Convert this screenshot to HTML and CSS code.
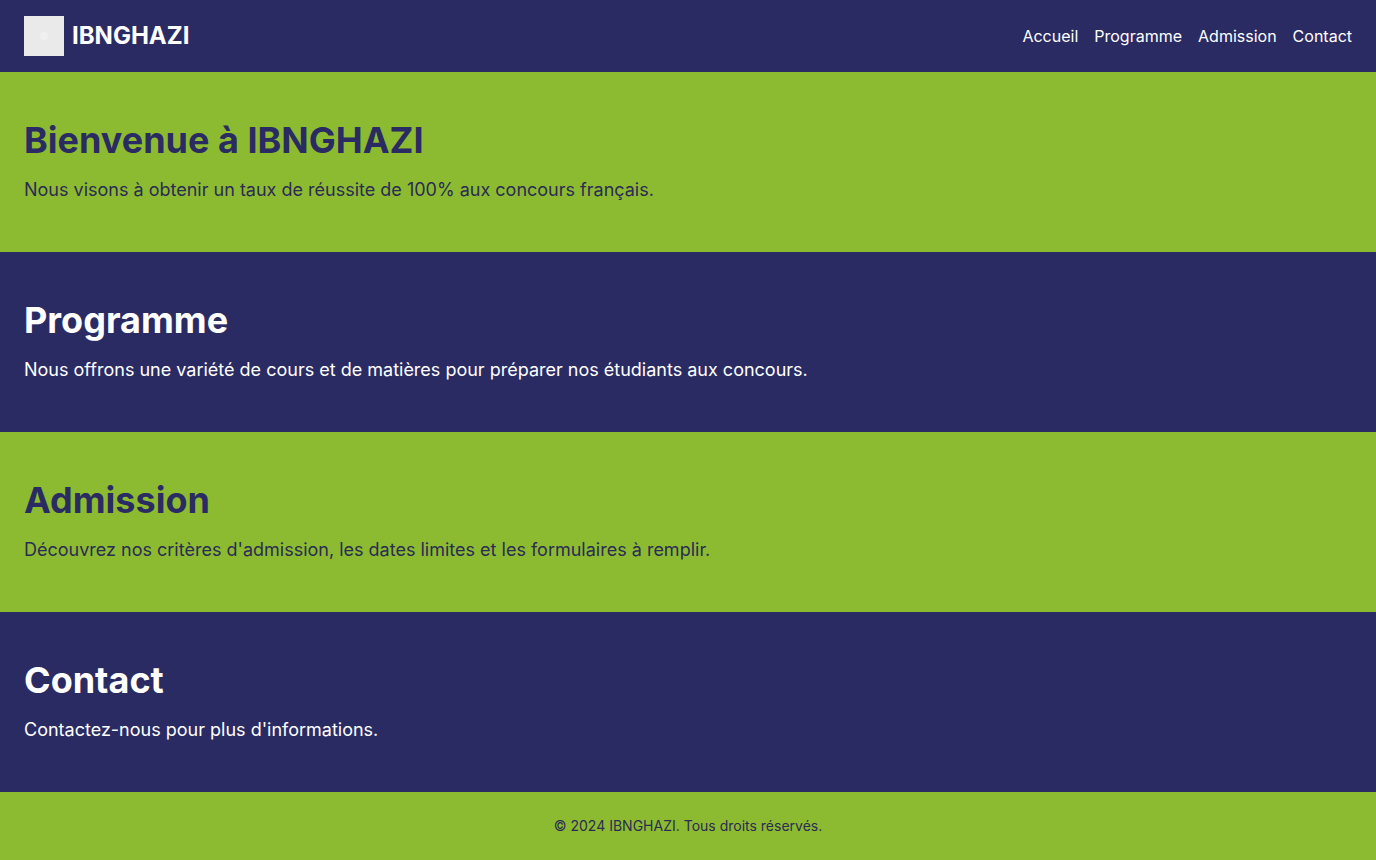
FILE: index.html
```html
<!DOCTYPE html>
<html lang="fr">
<head>
<meta charset="utf-8">
<meta name="viewport" content="width=device-width, initial-scale=1">
<title>IBNGHAZI</title>
<link rel="stylesheet" href="styles.css">
</head>
<body>
<header class="header">
  <div class="brand">
    <svg class="logo" viewBox="0 0 40 40" role="img" aria-label="Logo"><rect width="40" height="40" fill="#eaeaea"/><circle cx="20" cy="20" r="4" fill="#f0f0f0"/></svg>
    <span class="brand-name">IBNGHAZI</span>
  </div>
  <nav class="nav">
    <a href="#accueil">Accueil</a>
    <a href="#programme">Programme</a>
    <a href="#admission">Admission</a>
    <a href="#contact">Contact</a>
  </nav>
</header>
<main>
  <section id="accueil" class="section section-green">
    <h1 class="title">Bienvenue à IBNGHAZI</h1>
    <p class="text">Nous visons à obtenir un taux de réussite de 100% aux concours français.</p>
  </section>
  <section id="programme" class="section section-navy">
    <h2 class="title">Programme</h2>
    <p class="text">Nous offrons une variété de cours et de matières pour préparer nos étudiants aux concours.</p>
  </section>
  <section id="admission" class="section section-green">
    <h2 class="title">Admission</h2>
    <p class="text">Découvrez nos critères d'admission, les dates limites et les formulaires à remplir.</p>
  </section>
  <section id="contact" class="section section-navy">
    <h2 class="title">Contact</h2>
    <p class="text">Contactez-nous pour plus d'informations.</p>
  </section>
</main>
<footer class="footer">
  <p class="copyright">© 2024 IBNGHAZI. Tous droits réservés.</p>
</footer>
</body>
</html>
```
FILE: styles.css
```css
* { box-sizing: border-box; }

body {
  margin: 0;
  font-family: Inter, "Liberation Sans", sans-serif;
  font-size: 16px;
  font-optical-sizing: none;
  line-height: 24px;
  background: #8cbb31;
  color: #2b2b54;
}

.header {
  display: flex;
  align-items: center;
  justify-content: space-between;
  padding: 16px 24px;
  background: #2b2b64;
  color: #fff;
}

.brand {
  display: flex;
  align-items: center;
  gap: 8px;
}

.logo {
  display: block;
  width: 40px;
  height: 40px;
}

.brand-name {
  font-size: 24px;
  line-height: 32px;
  font-weight: 700;
}

.nav {
  display: flex;
  gap: 16px;
}

.nav a {
  color: inherit;
  text-decoration: none;
}

.section { padding: 48px 24px; }

.section-green { background: #8cbb31; }

.section-green .title { color: #2b2b64; }

.section-navy {
  background: #2b2b64;
  color: #fff;
}

.title {
  margin: 0 0 16px;
  font-size: 36px;
  line-height: 40px;
  font-weight: 700;
}

.text {
  margin: 0;
  font-size: 18px;
  line-height: 28px;
}

.footer {
  padding: 24px;
  background: #8cbb31;
  text-align: center;
}

.copyright {
  margin: 0;
  font-size: 14px;
  line-height: 20px;
}
```
